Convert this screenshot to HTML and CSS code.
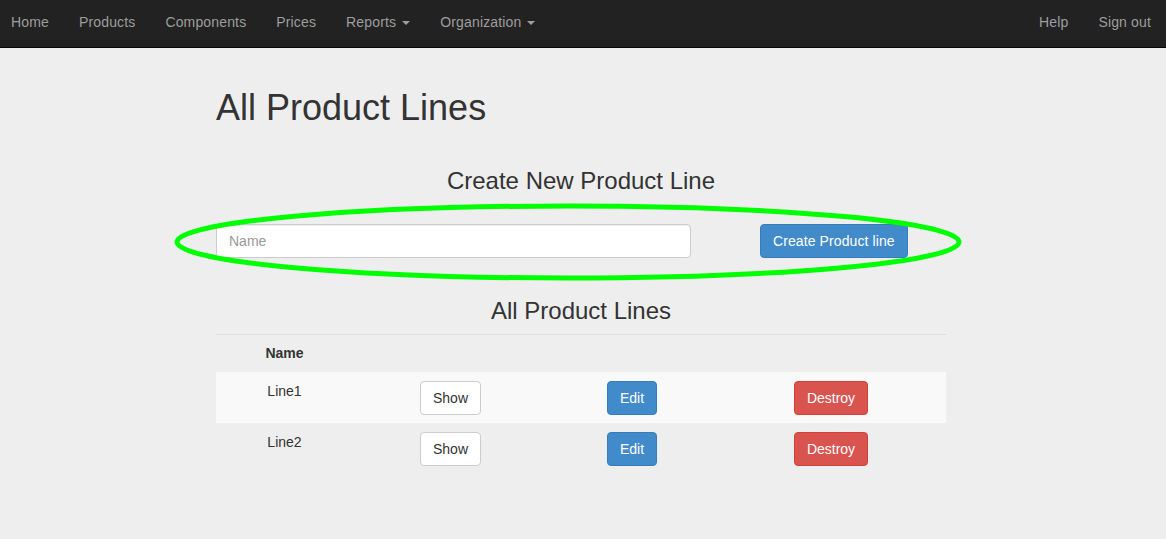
FILE: index.html
```html
<!DOCTYPE html>
<html lang="en">
<head>
<meta charset="utf-8">
<title>All Product Lines</title>
<link rel="stylesheet" href="styles.css">
</head>
<body>
<nav class="navbar">
  <ul class="nav nav-left">
    <li><a href="#">Home</a></li>
    <li><a href="#">Products</a></li>
    <li><a href="#">Components</a></li>
    <li><a href="#">Prices</a></li>
    <li><a href="#">Reports <b class="caret"></b></a></li>
    <li><a href="#">Organization <b class="caret"></b></a></li>
  </ul>
  <ul class="nav nav-right">
    <li><a href="#">Help</a></li>
    <li><a href="#">Sign out</a></li>
  </ul>
</nav>

<main class="container">
  <h1 class="page-title">All Product Lines</h1>

  <h3 class="section-title create-title">Create New Product Line</h3>
  <form class="create-form">
    <input class="form-control" type="text" placeholder="Name">
    <button type="button" class="btn btn-primary btn-create">Create Product line</button>
    <svg class="annotation" width="790" height="80" viewBox="0 0 790 80" aria-hidden="true">
      <ellipse cx="395" cy="40" rx="391" ry="36" fill="none" stroke="#00ff00" stroke-width="5"/>
    </svg>
  </form>

  <h3 class="section-title list-title">All Product Lines</h3>
  <table class="table">
    <thead>
      <tr>
        <th class="col-name">Name</th>
        <th class="col-show"></th>
        <th class="col-edit"></th>
        <th class="col-destroy"></th>
      </tr>
    </thead>
    <tbody>
      <tr class="striped">
        <td>Line1</td>
        <td><a class="btn btn-default" href="#">Show</a></td>
        <td><a class="btn btn-primary" href="#">Edit</a></td>
        <td><a class="btn btn-danger" href="#">Destroy</a></td>
      </tr>
      <tr>
        <td>Line2</td>
        <td><a class="btn btn-default" href="#">Show</a></td>
        <td><a class="btn btn-primary" href="#">Edit</a></td>
        <td><a class="btn btn-danger" href="#">Destroy</a></td>
      </tr>
    </tbody>
  </table>
</main>
</body>
</html>
```

FILE: styles.css
```css
* {
  box-sizing: border-box;
}

html, body {
  margin: 0;
  padding: 0;
}

body {
  background: #eeeeee;
  color: #333333;
  font-family: "Liberation Sans", Arial, Helvetica, sans-serif;
  font-size: 14px;
  line-height: 20px;
}

/* Navbar */
.navbar {
  display: flex;
  justify-content: space-between;
  height: 48px;
  background: #222222;
  border-bottom: 1px solid #080808;
}

.nav {
  display: flex;
  list-style: none;
  margin: 0;
  padding: 0;
}

.nav-left {
  margin-left: -4px;
}

.nav a {
  display: block;
  padding: 12px 15px 15px;
  color: #9d9d9d;
  text-decoration: none;
  font-size: 14px;
  line-height: 20px;
  letter-spacing: 0.15px;
}

.caret {
  display: inline-block;
  width: 0;
  height: 0;
  margin-left: 2px;
  vertical-align: middle;
  border-top: 4px solid #9d9d9d;
  border-left: 4px solid transparent;
  border-right: 4px solid transparent;
}

/* Content */
.container {
  width: 730px;
  margin-left: 216px;
}

.page-title {
  margin: 40px 0 0;
  font-size: 36px;
  line-height: 39.6px;
  font-weight: 500;
  color: #333333;
}

.section-title {
  margin: 0;
  font-size: 24px;
  line-height: 26.4px;
  font-weight: 500;
  text-align: center;
  color: #333333;
}

.create-title {
  margin-top: 40px;
}

.create-form {
  position: relative;
  display: flex;
  gap: 69px;
  margin: 30px 0 0;
}

.form-control {
  width: 475px;
  height: 34px;
  padding: 6px 12px;
  font-family: inherit;
  font-size: 14px;
  line-height: 20px;
  color: #555555;
  background: #ffffff;
  border: 1px solid #cccccc;
  border-radius: 4px;
  box-shadow: inset 0 1px 1px rgba(0, 0, 0, 0.075);
}

.form-control::placeholder {
  color: #999999;
}

.annotation {
  position: absolute;
  left: -43px;
  top: -22px;
  pointer-events: none;
}

.list-title {
  margin-top: 40px;
  margin-bottom: 10px;
}

/* Buttons */
.btn {
  display: inline-block;
  height: 34px;
  padding: 6px 12px;
  font-family: inherit;
  font-size: 14px;
  line-height: 20px;
  text-align: center;
  text-decoration: none;
  white-space: nowrap;
  border: 1px solid transparent;
  border-radius: 4px;
  cursor: pointer;
}

.btn-create {
  letter-spacing: 0.1px;
}

.btn-default {
  color: #333333;
  background: #ffffff;
  border-color: #cccccc;
}

.btn-primary {
  color: #ffffff;
  background: #428bca;
  border-color: #357ebd;
}

.btn-danger {
  color: #ffffff;
  background: #d9534f;
  border-color: #d43f3a;
}

/* Table */
.table {
  width: 100%;
  border-collapse: separate;
  border-spacing: 0;
  table-layout: fixed;
}

.table th,
.table td {
  padding: 8px;
  text-align: center;
  vertical-align: top;
  line-height: 20px;
}

.table th {
  font-weight: 700;
  border-top: 1px solid #dddddd;
  border-bottom: 1px solid transparent;
}

.table td {
  border-top: 1px solid transparent;
}

.col-name { width: 137px; }
.col-show { width: 195px; }
.col-edit { width: 168px; }
.col-destroy { width: 230px; }

.striped td {
  background: #f9f9f9;
}
```
